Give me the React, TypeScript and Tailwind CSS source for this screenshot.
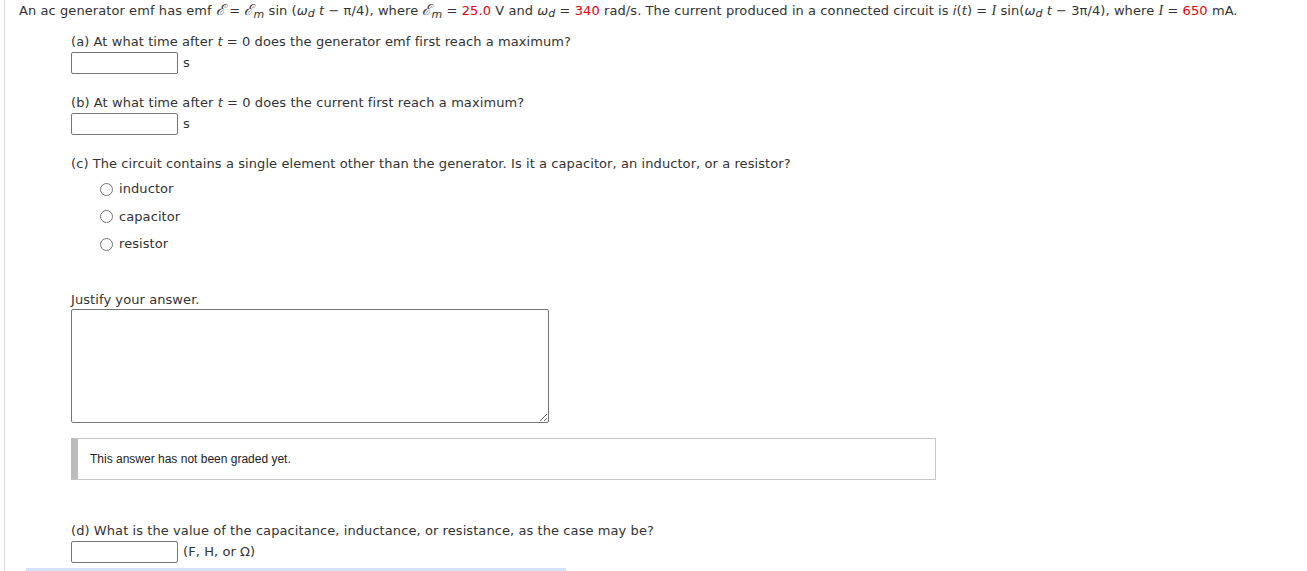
import React from "react";

function Red({ children }: { children: React.ReactNode }) {
  return <span className="text-[#e8000f]">{children}</span>;
}

function Wd() {
  return (
    <span>
      <i>ω</i>
      <sub className="text-[11px] italic leading-none relative top-[2px] align-baseline">d</sub>
    </span>
  );
}

function Em() {
  return (
    <span>
      <i className="font-['Liberation_Serif',serif] text-[15px]">ℰ</i>
      <sub className="text-[11px] italic leading-none relative top-[3px] align-baseline">m</sub>
    </span>
  );
}

function AnswerBox({ unit }: { unit: string }) {
  return (
    <div className="flex items-center mt-[1px] h-[22px]">
      <div className="w-[107px] h-[22px] border border-[#767676] rounded-[2px]" />
      <span className="ml-[5px]">{unit}</span>
    </div>
  );
}

function Radio({ label }: { label: string }) {
  return (
    <div className="flex items-center h-[18px]">
      <span className="w-[13px] h-[13px] rounded-full border border-[#767676] mr-[6px]" />
      <span>{label}</span>
    </div>
  );
}

export default function App() {
  return (
    <div className="font-['DejaVu_Sans',Verdana,sans-serif] text-[13px] tracking-[0.08px] text-[#333] bg-white h-[571px] overflow-hidden">
      <div className="ml-[4px] border-l border-[#dcdcdc] h-full pl-[14px] pt-[1px]">
        <p className="leading-[18px] whitespace-nowrap">
          An ac generator emf has emf <i className="font-['Liberation_Serif',serif] text-[15px]">ℰ</i> = <Em /> sin (<Wd /> <i>t</i> − π/4), where <Em /> = <Red>25.0</Red> V and <Wd /> = <Red>340</Red> rad/s. The current produced in a connected circuit is <i>i</i>(<i>t</i>) = <i className="font-['Liberation_Serif',serif] text-[14px]">I</i> sin(<Wd /> <i>t</i> − 3π/4), where <i className="font-['Liberation_Serif',serif] text-[14px]">I</i> = <Red>650</Red> mA.
        </p>

        <div className="ml-[52px]">
          <div className="mt-[13px]">
            <p className="leading-[18px]">(a) At what time after <i>t</i> = 0 does the generator emf first reach a maximum?</p>
            <AnswerBox unit="s" />
          </div>

          <div className="mt-[20px]">
            <p className="leading-[18px]">(b) At what time after <i>t</i> = 0 does the current first reach a maximum?</p>
            <AnswerBox unit="s" />
          </div>

          <div className="mt-[20px]">
            <p className="leading-[18px]">(c) The circuit contains a single element other than the generator. Is it a capacitor, an inductor, or a resistor?</p>
            <div className="ml-[29px] mt-[7px] flex flex-col gap-[9.5px]">
              <Radio label="inductor" />
              <Radio label="capacitor" />
              <Radio label="resistor" />
            </div>
          </div>

          <div className="mt-[38px]">
            <p className="leading-[18px]">Justify your answer.</p>
            <textarea className="block w-[478px] h-[114px] border border-[#767676] rounded-[2px] resize-y" />
          </div>

          <div className="mt-[15px] w-[865px] h-[42px] border border-[#c8c8c8] border-l-[7px] border-l-[#bcbcbc] flex items-center pl-[12px] font-['Liberation_Sans',Arial,sans-serif] text-[12px] tracking-normal text-[#222]">
            This answer has not been graded yet.
          </div>

          <div className="mt-[42px]">
            <p className="leading-[18px]">(d) What is the value of the capacitance, inductance, or resistance, as the case may be?</p>
            <AnswerBox unit="(F, H, or Ω)" />
          </div>
        </div>
        <div className="ml-[7px] mt-[5px] w-[540px] h-[4px] bg-[#d6e2f8]" />
      </div>
    </div>
  );
}
